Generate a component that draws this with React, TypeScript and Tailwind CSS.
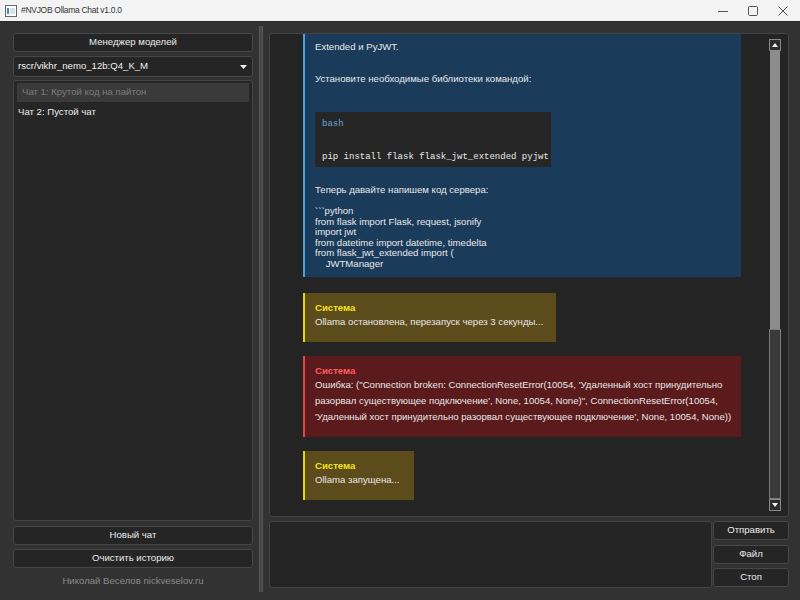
import React from "react";

const font = { fontFamily: '"Liberation Sans", Arial, sans-serif' };

function TitleBar() {
  return (
    <div className="flex h-[22px] shrink-0 items-center border-b border-[#2a2a2a] bg-[#f3f3f3] text-[#1f1f1f]">
      <svg width="12" height="12" viewBox="0 0 12 12" className="ml-[5px]">
        <rect x="0.5" y="0.5" width="11" height="11" fill="#ffffff" stroke="#5a6a72" />
        <rect x="2" y="3" width="2" height="6" fill="#3c8fa8" />
        <rect x="5" y="3" width="5" height="6" fill="#d7e3e8" />
      </svg>
      <span className="ml-[4px] text-[8.5px] tracking-[-0.3px] text-[#333]">#NVJOB Ollama Chat v1.0.0</span>
      <div className="ml-auto flex h-full items-center">
        <div className="flex h-full w-[30px] items-center justify-center">
          <svg width="10" height="10" viewBox="0 0 10 10">
            <line x1="0" y1="5.5" x2="10" y2="5.5" stroke="#555" strokeWidth="1" />
          </svg>
        </div>
        <div className="flex h-full w-[30px] items-center justify-center">
          <svg width="10" height="10" viewBox="0 0 10 10">
            <rect x="0.5" y="0.5" width="9" height="9" rx="1.2" fill="none" stroke="#555" strokeWidth="1" />
          </svg>
        </div>
        <div className="mr-[2px] flex h-full w-[30px] items-center justify-center">
          <svg width="10" height="10" viewBox="0 0 10 10">
            <path d="M0.5 0.5 L9.5 9.5 M9.5 0.5 L0.5 9.5" stroke="#555" strokeWidth="1" />
          </svg>
        </div>
      </div>
    </div>
  );
}

function Btn({ children, className = "" }: { children: React.ReactNode; className?: string }) {
  return (
    <div
      className={
        "flex h-[19px] items-center justify-center rounded-[3px] border border-[#474747] bg-[#252525] text-[9.6px] text-[#ececec] " +
        className
      }
    >
      {children}
    </div>
  );
}

function LeftPanel() {
  return (
    <div className="flex w-[240px] shrink-0 flex-col pt-[11px]">
      <Btn>Менеджер моделей</Btn>
      <div className="mt-[4px] flex h-[21px] items-center rounded-[3px] border border-[#474747] bg-[#252525] pl-[4px] pr-[5px] text-[9.6px] text-[#f0f0f0]">
        <span>rscr/vikhr_nemo_12b:Q4_K_M</span>
        <svg width="7" height="4" viewBox="0 0 7 4" className="ml-auto">
          <path d="M0 0 L7 0 L3.5 4 Z" fill="#f0f0f0" />
        </svg>
      </div>
      <div className="mt-[3px] h-[441px] rounded-[3px] border border-[#444] bg-[#262626] px-[3px] pt-[2px]">
        <div className="flex h-[19px] items-center bg-[#3a3a3a] pl-[5px] text-[9.6px] text-[#7c7c7c]">
          Чат 1: Крутой код на пайтон
        </div>
        <div className="flex h-[20px] items-center pl-[1px] text-[9.6px] text-[#ececec]">Чат 2: Пустой чат</div>
      </div>
      <Btn className="mt-[5px]">Новый чат</Btn>
      <Btn className="mt-[4px]">Очистить историю</Btn>
      <div className="mt-[6px] text-center text-[9.6px] leading-[14px] text-[#8a8a8a]">Николай Веселов nickveselov.ru</div>
    </div>
  );
}

function Title({ color, children }: { color: string; children: React.ReactNode }) {
  return (
    <div className="text-[9.6px] font-bold leading-[13px]" style={{ color }}>
      {children}
    </div>
  );
}

function Messages() {
  const code = [
    "```python",
    "from flask import Flask, request, jsonify",
    "import jwt",
    "from datetime import datetime, timedelta",
    "from flask_jwt_extended import (",
    "\u00a0\u00a0\u00a0\u00a0JWTManager",
  ];
  return (
    <div className="flex w-[438px] shrink-0 flex-col items-start text-[9.6px] text-[#e8e8e8]">
      <div className="w-[438px] border-l-2 border-[#48a2df] bg-[#1b3b5a] pb-[8px] pl-[10px] pt-[5px]">
        <div className="leading-[16px]">Extended и PyJWT.</div>
        <div className="mt-[16px] leading-[16px]">Установите необходимые библиотеки командой:</div>
        <div className="mt-[25px] w-[236px] bg-[#262626] pb-[4px] pl-[7px] pt-[6px]" style={{ fontFamily: '"Liberation Mono", "Courier New", monospace' }}>
          <div className="text-[9px] leading-[12px] text-[#6aa3d8]">bash</div>
          <div className="mt-[21px] whitespace-nowrap text-[9px] leading-[12px] text-[#e8e8e8]">
            pip install flask flask_jwt_extended pyjwt
          </div>
        </div>
        <div className="mt-[15px] leading-[16px]">Теперь давайте напишем код сервера:</div>
        <div className="mt-[8px]">
          {code.map((l, i) => (
            <div key={i} className="whitespace-pre leading-[10.5px]">
              {l}
            </div>
          ))}
        </div>
      </div>

      <div className="mt-[16px] border-l-2 border-[#e6d600] bg-[#5c4b1b] pb-[12px] pl-[10px] pr-[13px] pt-[8px]">
        <Title color="#f2e21a">Система</Title>
        <div className="leading-[16px]">Ollama остановлена, перезапуск через 3 секунды...</div>
      </div>

      <div className="mt-[14px] w-[438px] border-l-2 border-[#e04848] bg-[#5b1b1c] pb-[12px] pl-[10px] pt-[8px]">
        <Title color="#ff5a5a">Система</Title>
        <div className="whitespace-nowrap leading-[16px]">
          Ошибка: ("Connection broken: ConnectionResetError(10054, 'Удаленный хост принудительно
        </div>
        <div className="whitespace-nowrap leading-[16px]">
          разорвал существующее подключение', None, 10054, None)", ConnectionResetError(10054,
        </div>
        <div className="whitespace-nowrap leading-[16px]">
          'Удаленный хост принудительно разорвал существующее подключение', None, 10054, None))
        </div>
      </div>

      <div className="mt-[14px] border-l-2 border-[#e6d600] bg-[#5c4b1b] pb-[12px] pl-[10px] pr-[14px] pt-[8px]">
        <Title color="#f2e21a">Система</Title>
        <div className="leading-[16px]">Ollama запущена...</div>
      </div>
    </div>
  );
}

function ScrollBar() {
  return (
    <div className="mb-[5px] mr-[7px] mt-[5px] flex w-[12px] shrink-0 flex-col">
      <div className="flex h-[12px] items-center justify-center border border-[#8a8a8a] bg-[#2c2c2c]">
        <svg width="6" height="4" viewBox="0 0 6 4">
          <path d="M0 4 L6 4 L3 0 Z" fill="#f2f2f2" />
        </svg>
      </div>
      <div className="mx-[1px] h-[278px] bg-[#8c8c8c]" />
      <div className="flex-1 border border-[#7a7a7a] bg-[#3a3a3a]" />
      <div className="flex h-[12px] items-center justify-center border border-[#8a8a8a] bg-[#2c2c2c]">
        <svg width="6" height="4" viewBox="0 0 6 4">
          <path d="M0 0 L6 0 L3 4 Z" fill="#f2f2f2" />
        </svg>
      </div>
    </div>
  );
}

function RightPanel() {
  return (
    <div className="flex w-[520px] shrink-0 flex-col pt-[11px]">
      <div className="flex h-[484px] overflow-hidden rounded-[3px] border border-[#444] bg-[#242424]">
        <div className="w-[33px] shrink-0" />
        <Messages />
        <div className="flex-1" />
        <ScrollBar />
      </div>
      <div className="mt-[4px] flex h-[67px] gap-[1px]">
        <div className="w-[443px] rounded-[3px] border border-[#444] bg-[#252525]" />
        <div className="flex w-[76px] flex-col">
          <Btn>Отправить</Btn>
          <Btn className="mt-[5px]">Файл</Btn>
          <Btn className="mt-[4px]">Стоп</Btn>
        </div>
      </div>
    </div>
  );
}

export default function App() {
  return (
    <div className="flex h-[600px] w-[800px] flex-col overflow-hidden bg-[#323232]" style={font}>
      <TitleBar />
      <div className="flex flex-1 pl-[13px]">
        <LeftPanel />
        <div className="mb-[8px] ml-[6px] mt-[4px] w-[4px] shrink-0 border-x border-[#575757] bg-[#484848]" />
        <div className="ml-[6px]">
          <RightPanel />
        </div>
      </div>
    </div>
  );
}
